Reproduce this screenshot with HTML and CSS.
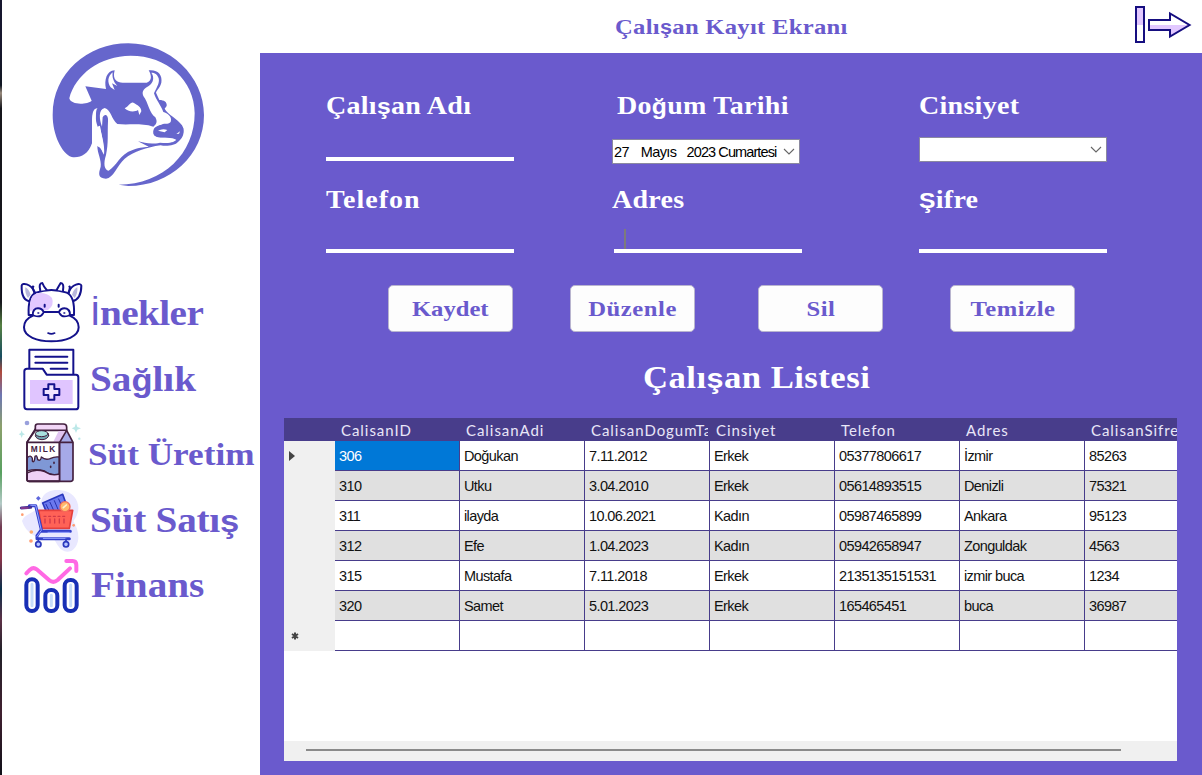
FILE: index.html
```html
<!DOCTYPE html>
<html lang="tr">
<head>
<meta charset="utf-8">
<title>Çalışan Kayıt Ekranı</title>
<link rel="stylesheet" href="styles.css">
</head>
<body>
<div class="app">
  <div class="edge"></div>
  <aside class="sidebar">
    <svg class="logo" viewBox="0 0 774 510">
      <g transform="translate(-6 0)" fill="#6666cc">
        <path d="M158 255C158 130 262 40 385 40C510 40 612 140 612 255C612 375 510 468 385 468L356 464C490 464 584 370 584 250C584 150 500 77 392 77C300 77 225 135 208 205C212 226 262 224 275 212L256 169L318 177C312 150 320 122 344 121C336 150 352 158 368 158L440 158C458 152 454 135 446 121C474 118 488 135 484 158C480 174 470 180 468 188L478 210C492 210 502 216 500 228L494 236C504 254 532 266 546 286C556 305 550 324 534 336C526 346 500 350 482 346C440 352 402 364 374 386C352 406 340 444 318 446C292 444 296 430 302 410C305 390 292 370 292 348C304 352 306 365 312 374C316 345 302 310 300 288C285 280 286 255 292 235C270 235 278 280 276 340C264 375 240 384 215 381C185 370 158 315 158 255Z"/>
        <path fill="#fff" d="M290 236C272 240 278 290 277 340C280 352 290 352 291 347C304 352 308 362 310 372C314 345 302 305 300 290C286 286 284 258 290 236Z"/>
        <path fill="#fff" d="M338 127C322 140 322 158 332 172L344 180L336 160L352 168C340 155 336 142 338 127ZM454 128C464 142 460 158 446 168C432 176 424 184 430 198C446 220 448 250 466 262C474 276 468 284 460 290C420 278 385 286 352 282C334 268 334 240 314 234C294 238 298 270 306 290L308 262C316 248 326 258 324 274C322 310 326 340 318 375C310 400 312 420 326 422C350 408 360 372 398 360C420 350 438 352 446 350L414 334C434 338 450 344 480 338C510 342 525 336 530 328C508 316 480 328 462 316C456 300 468 288 484 284C494 278 502 286 512 276C518 260 502 250 490 246C484 228 468 210 462 190C468 176 480 160 476 145C472 132 464 128 454 128Z"/>
        <path fill="#fff" d="M374 235C386 230 390 216 400 218C412 225 424 230 424 244L418 255L414 240C402 248 382 244 374 235Z"/>
        <path d="M460 305C460 286 482 284 502 288C520 278 540 280 550 294C552 320 540 332 530 330C515 320 490 326 474 322Q460 318 460 305ZM290 238L299 238Q294 262 301 286L293 290Q284 268 290 238Z"/>
        <path fill="#fff" d="M474 302Q488 294 502 300L494 307ZM529 312L540 304L537 311Z"/>
      </g>
    </svg>
    <nav class="nav">
      <a class="nav-item cows">
        <svg class="nav-icon" viewBox="45 30 204 201" fill="#fff" stroke="#14128c" stroke-width="6" stroke-linecap="round" stroke-linejoin="round">
          <path d="M104 66C92 40 66 37 65 47C64 72 70 92 92 94M206 66C216 42 242 37 244 47C244 74 234 90 216 94"/>
          <path stroke="none" fill="#14128c" opacity=".3" d="M76 52Q86 56 92 74L84 84Q74 70 76 52ZM232 52Q222 56 216 74L224 84Q234 70 232 52Z"/>
          <path d="M86 135C84 95 92 74 108 68Q154 52 200 68C218 76 224 96 222 135Z"/>
          <path stroke="none" fill="#e2c8ff" d="M90 122Q86 80 110 70Q140 66 156 84Q164 106 144 120Z"/>
          <path d="M121 62Q115 39 127 39Q132 52 140 60M189 62Q193 39 182 39Q174 52 170 60M104 70Q94 46 100 50M206 70Q212 46 208 50"/>
          <path d="M134 104V110M176 104V110"/>
          <path d="M99 137C80 145 72 158 72 172C72 200 112 214 154 214C196 214 236 200 236 172C236 158 228 145 209 137C212 121 202 115 193 115C185 115 180 120 177 126H131C128 120 122 115 114 115C105 115 96 122 99 137Z"/>
          <path stroke-width="5" d="M103 137Q122 144 130 129M205 137Q186 144 178 129M114 129H116M192 129H194M144 189Q154 194 164 189"/>
        </svg>
        <span class="display nav-label"><span class="alt thin">İ</span>nekler</span>
      </a>
      <a class="nav-item health">
        <svg class="nav-icon" viewBox="45 231 204 219" fill="#fff" stroke="#14128c" stroke-width="6" stroke-linecap="round" stroke-linejoin="round">
          <path d="M88 310V239H220V330H88Z"/>
          <path d="M106 260H202M106 278H202M152 296H202"/>
          <path d="M73 408V304Q73 296 81 296H128L140 314H228Q235 314 235 322V410Q235 418 227 418H81Q73 418 73 408Z"/>
          <path stroke="none" fill="#e0c5ff" d="M90 330H218V402H90Z"/>
          <path fill="#f1e4ff" d="M145 343H163V357H178V375H163V389H145V375H131V357H145Z"/>
        </svg>
        <span class="display nav-label">Sa<span class="alt">ğ</span>lık</span>
      </a>
      <a class="nav-item milk">
        <svg class="nav-icon" viewBox="45 15 204 204" stroke="#43203f" stroke-width="5" stroke-linecap="round" stroke-linejoin="round">
          <g stroke="none" fill="#bce8e8"><path d="M228 24L232 36L243 40L232 44L228 54L224 44L215 40L224 36ZM65 46L68 54L75 58L68 61L65 69L62 61L56 58L62 54Z"/><circle cx="81" cy="24" r="7" fill="#99a0dc"/><circle cx="238" cy="71" r="3.500"/></g>
          <path fill="#fff" d="M106 42L81 82V193Q81 199 88 199H178V82Z"/>
          <path fill="#fff" stroke="none" d="M106 46H198L179 84H82Z"/>
          <path fill="#f2d6f7" d="M106 46V34Q106 27 113 27H190Q200 27 200 36V46Z"/>
          <path fill="#e0c4f0" stroke="none" d="M176 48H196L180 80H160Z"/>
          <path fill="#a6a9e8" d="M200 46L219 82V192Q219 199 211 199H179V82Z"/>
          <path fill="#7f98d6" stroke-width="4" d="M82 128Q92 118 97 130V138Q103 146 105 124Q111 118 113 134Q122 140 124 126Q136 136 150 131Q164 124 177 126V178Q154 184 134 168Q106 160 82 168Z"/>
          <path fill="#efd1f6" stroke-width="4" d="M82 174Q105 160 134 170Q155 184 178 177V198H82Z"/>
          <path fill="none" d="M106 46L81 82V193Q81 199 88 199H178M83 82H217M152 154V157M162 142V145"/>
          <ellipse cx="126" cy="61" rx="20" ry="13" fill="#75a7b3" stroke-width="3"/>
          <ellipse cx="125" cy="56" rx="19" ry="9" fill="#a8e0df" stroke-width="3"/>
          <text class="carton-text" x="92" y="111" stroke="none" fill="#43203f" textLength="74">MILK</text>
        </svg>
        <span class="display nav-label">Süt Üretim</span>
      </a>
      <a class="nav-item sales">
        <svg class="nav-icon" viewBox="45 219 204 195" fill="none" stroke="#2b38bd" stroke-width="5" stroke-linecap="round" stroke-linejoin="round">
          <path fill="#e9e8ff" stroke="none" d="M126 250C140 216 198 220 220 242C244 268 236 300 220 318C240 350 242 390 214 408C182 418 174 390 160 370C120 376 80 360 66 318C76 290 114 300 126 250Z"/>
          <path fill="#6b78ee" d="M128 264L188 238L206 288H138Z"/>
          <path stroke="#2732ad" stroke-width="3" d="M138 268L146 284M150 262L160 284M163 257L174 283M176 252L184 270"/>
          <path fill="#ff6257" stroke="#e5403d" d="M116 286H218L208 340H126Z"/>
          <circle cx="195" cy="275" r="15" fill="#ffb96d" stroke="#f36b59" stroke-width="4"/>
          <path stroke="#fff0cf" stroke-width="5" d="M190 278L199 270"/>
          <path stroke="#d33a48" stroke-width="4" d="M132 304H138M146 304H152M160 304H166M174 304H180M188 304H194M135 312V324M150 312V324M164 312V324M178 312V324M192 312V324"/>
          <path stroke="#3440cc" stroke-width="9" d="M88 272H107L124 344L111 362V371H208M126 349H211"/>
          <path stroke="#98a5ff" stroke-width="3" d="M92 271H107L124 346L111 364M144 352H208M130 370H198"/>
          <path stroke="#453395" stroke-width="9" d="M64 279L92 277"/><path stroke="#bb3d8b" stroke-width="3" d="M64 279H84"/>
          <path d="M115 372V379M198 372V379"/><circle cx="115" cy="388" r="8" fill="#b8c5ff"/><circle cx="198" cy="388" r="8" fill="#b8c5ff"/>
          <g stroke="none" fill="#ff9c70"><circle cx="94" cy="351" r="5.500" fill="#ffad70"/><circle cx="93" cy="378" r="5.500"/><circle cx="221" cy="331" r="4"/><circle cx="67" cy="299" r="4"/><path fill="#6068dd" d="M115 243L122 250L115 257L108 250Z"/></g>
        </svg>
        <span class="display nav-label">Süt Satı<span class="alt">ş</span></span>
      </a>
      <a class="nav-item finance">
        <svg class="nav-icon" viewBox="45 414 204 195" fill="#fff" stroke="#182fb5" stroke-width="12" stroke-linecap="round" stroke-linejoin="round">
          <rect x="79" y="493" width="34" height="95" rx="17"/><rect x="136" y="525" width="36" height="63" rx="17"/><rect x="194" y="495" width="36" height="93" rx="17"/>
          <path stroke="#c6dcfa" stroke-width="9" d="M96 508V572M154 541V572M212 510V572"/>
          <path fill="none" stroke="#ff69e4" d="M79 475L90 464Q100 455 110 463L148 496Q160 506 173 495L210 460M199 438H218Q229 438 229 450V468"/>
        </svg>
        <span class="display nav-label">Finans</span>
      </a>
    </nav>
  </aside>
  <div class="content">
    <header class="topbar">
      <h1 class="display page-title">Çalı<span class="alt">ş</span>an Kayıt Ekranı</h1>
      <svg class="exit" viewBox="0 0 60 40" stroke="#160e80" stroke-width="2" fill="#fff">
        <path fill="#e2c8ff" stroke="none" d="M2 2H10V20H2ZM16 20H57L37 31V26H16Z"/>
        <path fill="none" d="M2 2H10V37H2ZM15 15H36V8.500L55.500 20L36 31.500V25H15Z"/>
      </svg>
    </header>
    <main class="panel">
      <section class="form">
        <div class="field"><label class="display">Çalı<span class="alt">ş</span>an Adı</label><div class="line"></div></div>
        <div class="field birth"><label class="display">Do<span class="alt">ğ</span>um Tarihi</label>
          <div class="select date"><span class="day">27</span><span class="month">Mayıs</span><span class="year">2023 Cumartesi</span><svg class="chevron" viewBox="0 0 12 7"><path d="M1 1L6 6L11 1"/></svg></div></div>
        <div class="field"><label class="display">Cinsiyet</label>
          <div class="select gender"><svg class="chevron" viewBox="0 0 12 7"><path d="M1 1L6 6L11 1"/></svg></div></div>
        <div class="field low phone"><label class="display">Telefon</label><div class="line"></div></div>
        <div class="field low address"><label class="display">Adres</label><div class="line"><i class="caret"></i></div></div>
        <div class="field low"><label class="display"><span class="alt">Ş</span>ifre</label><div class="line"></div></div>
      </section>
      <div class="actions">
        <button><span class="display tight">Kaydet</span></button>
        <button><span class="display">Düzenle</span></button>
        <button><span class="display">Sil</span></button>
        <button><span class="display">Temizle</span></button>
      </div>
      <h2 class="display list-title">Çalı<span class="alt">ş</span>an Listesi</h2>
      <div class="grid">
        <div class="row head"><b></b><span>CalisanID</span><span>CalisanAdi</span><span>CalisanDogumTa</span><span>Cinsiyet</span><span>Telefon</span><span>Adres</span><span>CalisanSifre</span></div>
        <div class="row"><b><svg class="marker" viewBox="0 0 6 10"><path d="M0 0L6 5L0 10Z"/></svg></b><span class="selected">306</span><span>Doğukan</span><span>7.11.2012</span><span>Erkek</span><span>05377806617</span><span>İzmir</span><span>85263</span></div>
        <div class="row odd"><b></b><span>310</span><span>Utku</span><span>3.04.2010</span><span>Erkek</span><span>05614893515</span><span>Denizli</span><span>75321</span></div>
        <div class="row"><b></b><span>311</span><span>ilayda</span><span>10.06.2021</span><span>Kadın</span><span>05987465899</span><span>Ankara</span><span>95123</span></div>
        <div class="row odd"><b></b><span>312</span><span>Efe</span><span>1.04.2023</span><span>Kadın</span><span>05942658947</span><span>Zonguldak</span><span>4563</span></div>
        <div class="row"><b></b><span>315</span><span>Mustafa</span><span>7.11.2018</span><span>Erkek</span><span>2135135151531</span><span>izmir buca</span><span>1234</span></div>
        <div class="row odd"><b></b><span>320</span><span>Samet</span><span>5.01.2023</span><span>Erkek</span><span>165465451</span><span>buca</span><span>36987</span></div>
        <div class="row"><b><svg class="star" viewBox="0 0 8 8"><path d="M4 .5V7.500M1 2L7 6M7 2L1 6"/></svg></b><span></span><span></span><span></span><span></span><span></span><span></span><span></span></div>
        <div class="scroll"><div class="thumb"></div></div>
      </div>
    </main>
  </div>
</div>
</body>
</html>
```
FILE: styles.css
```css
* { box-sizing: border-box; }
body { margin: 0; background: #fff; font-family: "Liberation Sans", Arial, sans-serif; }
.app { display: flex; width: 1202px; height: 775px; overflow: hidden; }
.edge {
  width: 2px;
  background: linear-gradient(#17172e 0 6%, #101622 11%, #978a7c 12%, #15151b 14% 26%, #17171d 39%, #568143 42%, #174d60 46%, #b04a3d 48%, #6d77b3 51%, #8ca06c 55%, #58a060 61%, #b4cac7 65%, #713a52 68%, #8c354a 72%, #092e4a 76%, #5c3146 80%, #202028 84%, #402030 92%, #101018);
}
.sidebar { width: 258px; padding-top: 30px; }
.logo { display: block; width: 258px; height: 170px; }
.nav { padding: 80px 0 0 13px; }
.nav-item { display: flex; gap: 8px; }
.nav-icon { width: 68px; height: 100%; flex: none; }
.cows { height: 67px; }
.health { height: 73px; }
.milk { height: 68px; }
.sales, .finance { height: 65px; }
.carton-text { font: bold 25px "Liberation Sans", sans-serif; }

.display {
  display: inline-block;
  font-family: "Liberation Serif", "Times New Roman", serif;
  font-weight: bold;
  color: #6a5acd;
  white-space: nowrap;
  transform: scaleX(1.12);
  transform-origin: left;
}
.alt { font-family: "Liberation Sans", Arial, sans-serif; font-size: .88em; }
.thin { font-weight: normal; font-size: .96em; }
.nav-label { font-size: 35px; line-height: 40px; margin-top: 13px; height: 40px; }
.cows .nav-label { margin: 14px 0 0 -1px; letter-spacing: -.5px; }
.health .nav-label { margin-left: -1px; }
.sales .nav-label { margin-left: -1px; letter-spacing: -.2px; }
.milk .nav-label { font-size: 32px; margin: 14px 0 0 -3px; transform: scaleX(1.1); }

.content { width: 942px; display: flex; flex-direction: column; }
.topbar { height: 53px; display: flex; justify-content: space-between; padding: 5px 8px 0 355px; }
.page-title { margin: 7px 0 0; font-size: 22px; line-height: 30px; letter-spacing: .25px; }
.exit { width: 60px; height: 40px; }
.panel { flex: 1; background: #6a5acd; padding: 38px 26px 0 24px; }
.form {
  display: grid;
  grid-template-columns: 286px 307px 188px;
  grid-template-rows: 94px 100px;
  margin-left: 42px;
}
.field { width: 188px; }
.field label { display: block; color: #fff; font-size: 25px; line-height: 30px; height: 30px; width: 150px; letter-spacing: .25px; }
.phone label { letter-spacing: .9px; }
.birth label { margin-left: 5px; }
.line { height: 4px; margin-top: 36px; background: #fff; }
.low .line { margin-top: 34px; }
.address .line { margin: 34px -2px 0 2px; position: relative; }
.caret { position: absolute; left: 10px; bottom: 4px; width: 2px; height: 20px; background: #7d7b7b; }
.select {
  height: 25px;
  background: #fff;
  border: 1px solid #8b89a0;
  display: flex;
  align-items: center;
  justify-content: flex-end;
  font-size: 14.5px;
  letter-spacing: -.65px;
  padding-right: 4px;
}
.date { margin-top: 18px; padding-left: 1px; justify-content: flex-start; white-space: nowrap; }
.gender { margin-top: 16px; }
.day { width: 27px; }
.month { width: 46px; }
.year { width: 97px; letter-spacing: -.9px; }
.chevron { width: 12px; height: 7px; fill: none; stroke: #666; stroke-width: 1.1; flex: none; }

.actions { display: grid; grid-template-columns: 182px 188px 192px 125px; margin-left: 104px; }
.actions button {
  width: 125px;
  height: 47px;
  padding: 1px 0 0;
  background: #fdfdfd;
  border: 1px solid #b9b5cf;
  border-radius: 5px;
}
.actions .display { font-size: 22px; transform-origin: center; letter-spacing: .5px; }
.actions .tight { letter-spacing: 0; }
.list-title { display: block; margin: 26px 0 0 359px; height: 40px; width: 230px; color: #fff; font-size: 31px; line-height: 40px; letter-spacing: .4px; }

.grid { width: 893px; height: 343px; margin-top: 20px; background: #fff; overflow: hidden; display: flex; flex-direction: column; }
.row { display: grid; grid-template-columns: 51px repeat(7, 125px); height: 30px; flex: none; }
.row b { background: #f0f0f0; display: flex; align-items: center; padding-left: 5px; }
.row span {
  border-right: 1px solid #483d8b;
  border-bottom: 1px solid #483d8b;
  padding: 0 0 0 4px;
  font-size: 14.5px;
  line-height: 31px;
  letter-spacing: -.6px;
  color: #111;
  overflow: hidden;
  white-space: nowrap;
}
.row.odd span { background: #e0e0e0; }
.row .selected { background: #0078d7; color: #fff; }
.row.head { height: 23px; background: #483d8b; }
.head b { background: none; }
.row.head span { border: 0; border-right: 2px solid transparent; background-clip: padding-box; color: #e9e6f8; font-family: Lato, sans-serif; font-size: 15px; letter-spacing: .95px; line-height: 24px; padding-left: 6px; }
.marker { width: 6px; height: 10px; fill: #444; }
.star { width: 8px; height: 8px; margin-left: 2px; stroke: #444; stroke-width: 2; }
.scroll { margin-top: auto; height: 20px; background: #f0f0f0; padding: 8px 56px 0 22px; }
.thumb { height: 2px; background: #8a8a8a; }
```
